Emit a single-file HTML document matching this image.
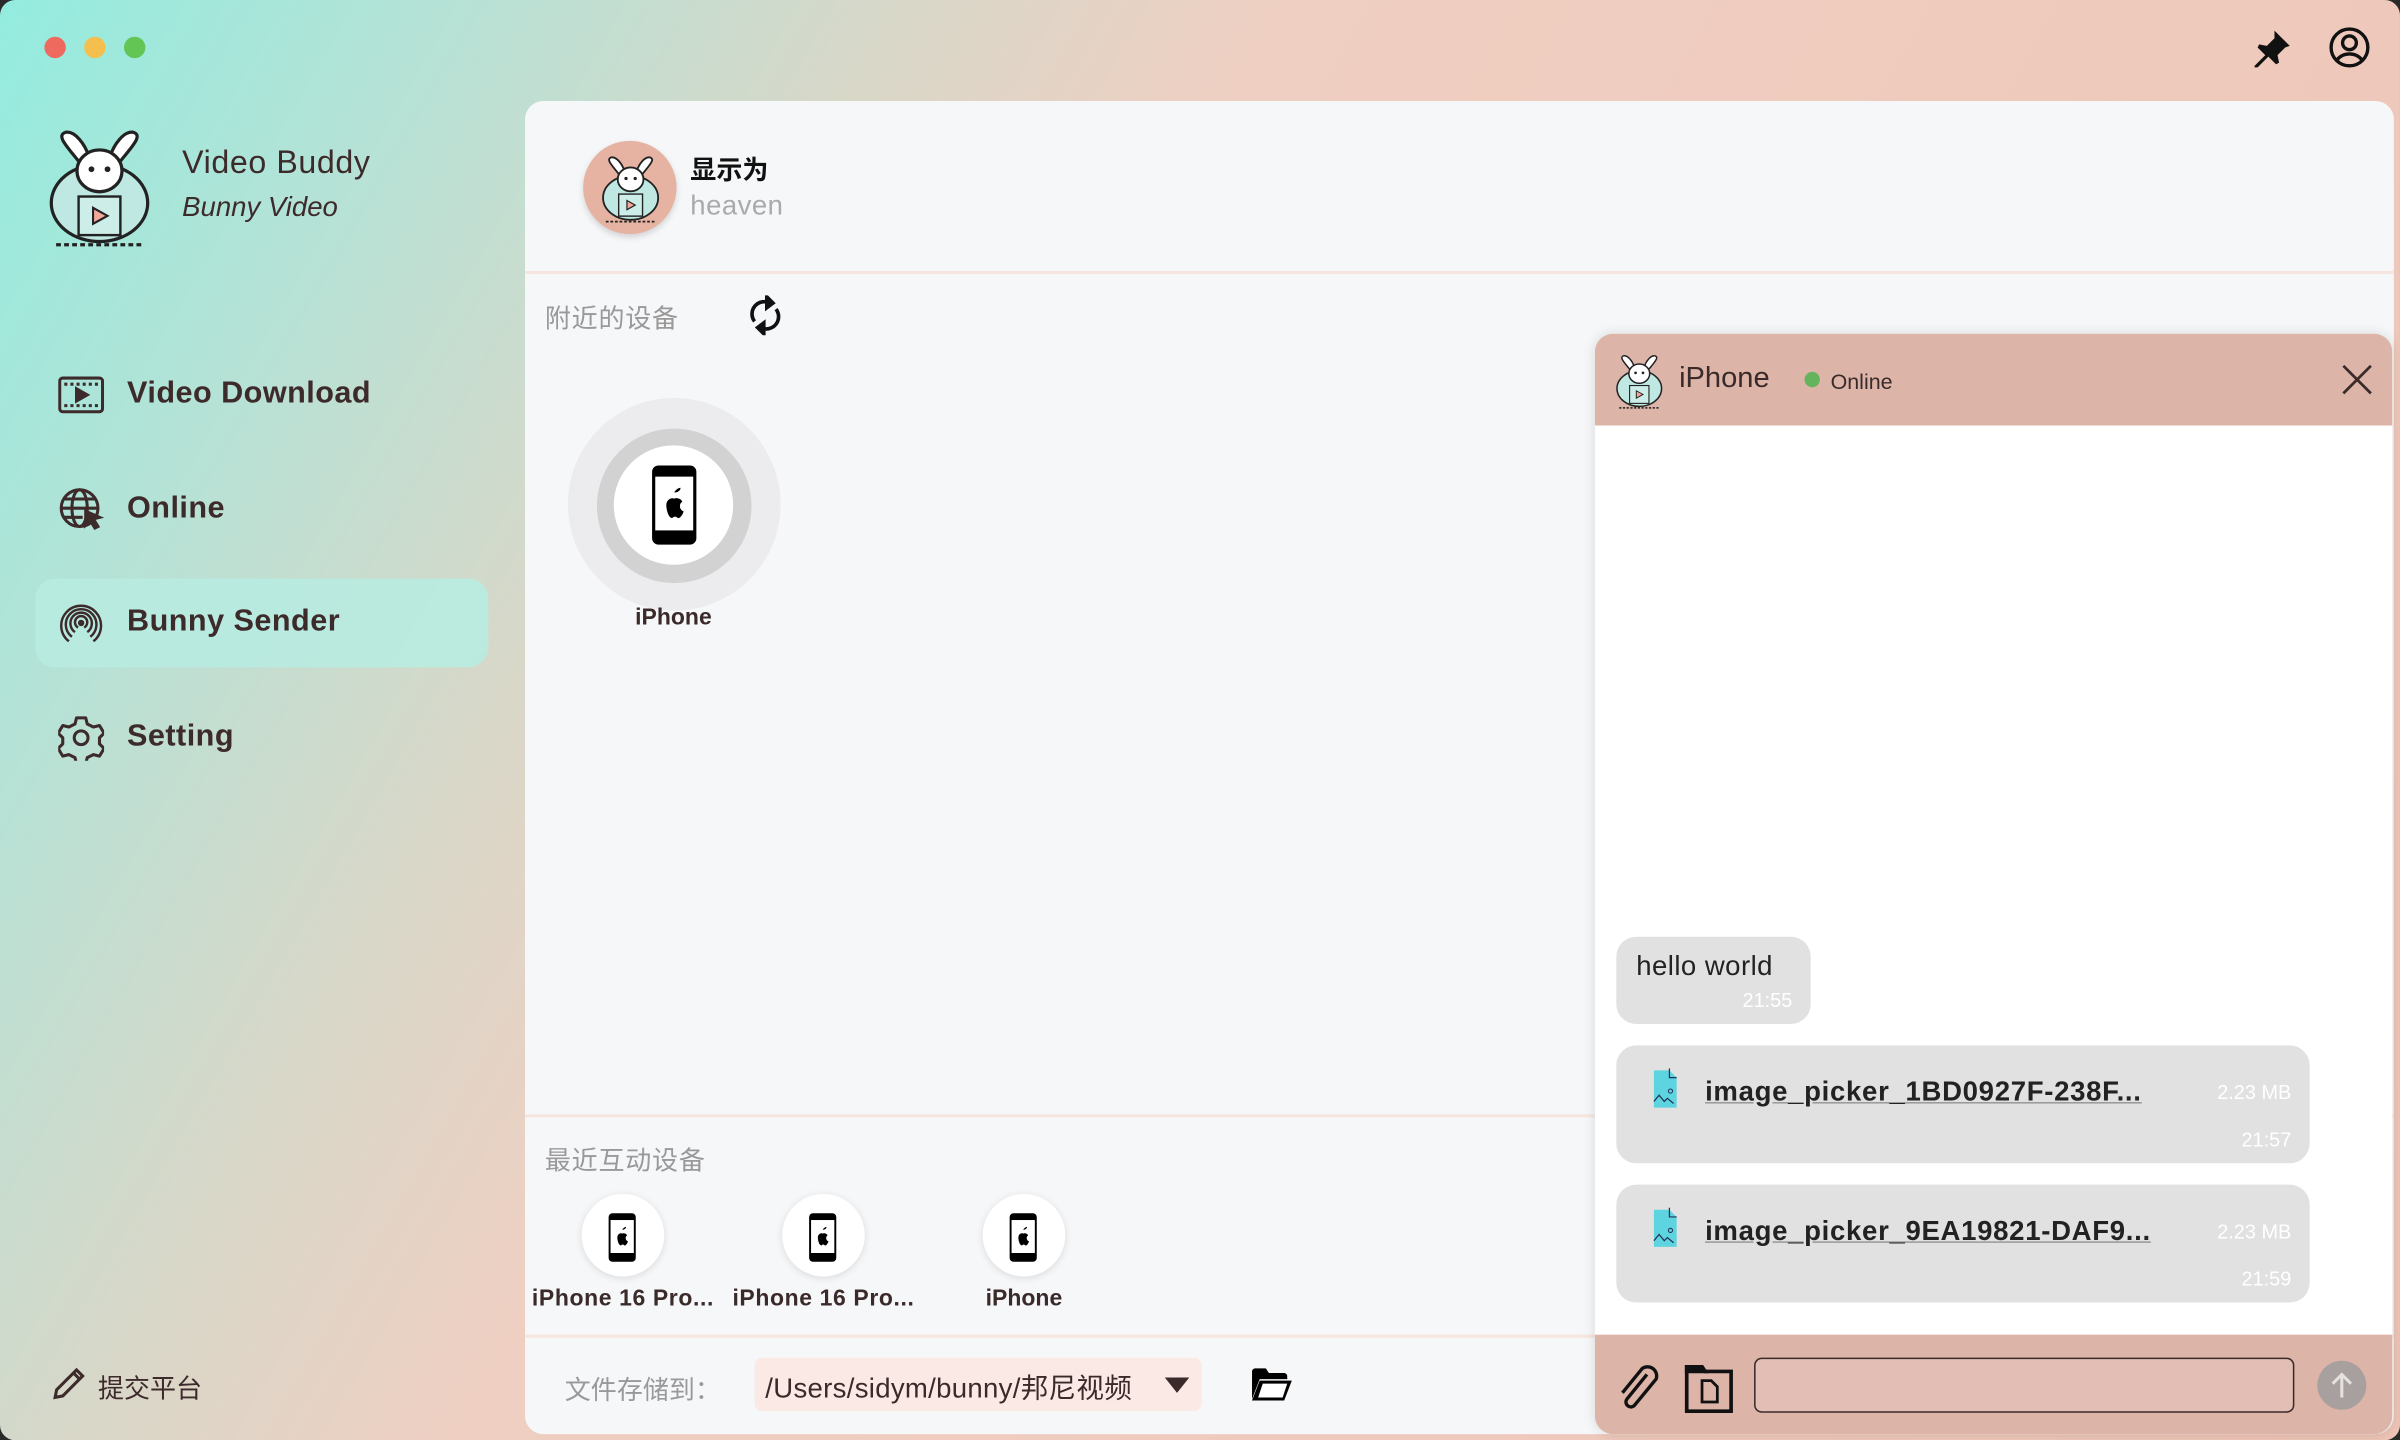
<!DOCTYPE html>
<html><head><meta charset="utf-8">
<style>
*{margin:0;padding:0;box-sizing:border-box}
html,body{width:2400px;height:1440px;overflow:hidden;background:#2a2a2a}
#s{position:absolute;left:0;top:0;width:1568px;height:941px;transform:scale(1.5306);transform-origin:0 0;
background:linear-gradient(120deg,#93ecdf 0%,#b6e2d6 14%,#d6d8c9 27%,#efcfc2 40%,#eec4b6 100%);
font-family:"Liberation Sans","Noto Sans CJK SC",sans-serif;color:#3a2a2a;overflow:hidden;border-radius:10px}
.a{position:absolute}
.dot{position:absolute;top:24px;width:14px;height:14px;border-radius:50%}
.nav{position:absolute;left:83px;font-size:20px;font-weight:bold;color:#3d2a2b;letter-spacing:.3px}
.main{position:absolute;left:343px;top:66px;width:1221px;height:871px;background:#f6f7f9;border-radius:12px;overflow:hidden}
.hr{position:absolute;left:0;right:0;height:2px;background:#f7e6df}
.grey{color:#999;font-size:17px}
.sc{position:absolute;width:54px;height:54px;border-radius:50%;background:#fff;box-shadow:0 1px 5px rgba(0,0,0,.12)}
.lb{position:absolute;font-size:15px;font-weight:bold;color:#3a2a2a;width:140px;text-align:center}
.chat{position:absolute;left:1042px;top:218px;width:521px;height:719px;background:#fff;border-radius:12px;overflow:hidden;box-shadow:0 0 8px rgba(0,0,0,.12)}
.bub{position:absolute;background:#e1e1e1;border-radius:13px}
.fn{position:absolute;left:58px;top:20px;font-size:18px;font-weight:bold;color:#222;letter-spacing:.45px;text-decoration:underline;text-decoration-color:#999}
.sz{position:absolute;right:12px;top:23px;font-size:13px;color:#fff}
.tm{position:absolute;right:12px;bottom:8px;font-size:13px;color:#fff}
</style></head><body>
<svg width="0" height="0" style="position:absolute">
<defs>
<symbol id="ph" viewBox="0 0 30 52">
<rect x="1" y="1" width="28" height="50" rx="4" fill="#000"/>
<rect x="3" y="8" width="24" height="34" fill="#fff"/>
<path d="M15 18c1-2 3-3 4-3 0 2-2 3-4 3z M10 26c0-4 4-5 5-4 1-1 5 0 5 2-2 1-2 5 1 6-1 3-3 5-4 4-1-1-2-1-3 0-2 1-4-4-4-8z" fill="#000"/>
</symbol>
<symbol id="bun" viewBox="0 0 70 80">
<ellipse cx="35" cy="52" rx="30" ry="24" fill="#bfe8e2" stroke="#222" stroke-width="2"/>
<path d="M22 26c-8-10-14-16-8-18 6-1 12 8 14 14M48 26c8-10 14-16 8-18-6-1-12 8-14 14" fill="#fff" stroke="#222" stroke-width="2"/>
<ellipse cx="35" cy="32" rx="14" ry="13" fill="#fff" stroke="#222" stroke-width="2"/>
<circle cx="30" cy="31" r="1.8" fill="#222"/><circle cx="40" cy="31" r="1.8" fill="#222"/>
<rect x="22" y="48" width="26" height="24" fill="#cdeee8" stroke="#222" stroke-width="1.5"/>
<path d="M31 55l9 5-9 5z" fill="#f4a89a" stroke="#222" stroke-width="1.3"/>
<path d="M8 78h54" stroke="#222" stroke-width="2" stroke-dasharray="3 2"/>
</symbol>
</defs></svg>
<div id="s">
<div class="dot" style="left:29px;background:#ee6a5e"></div>
<div class="dot" style="left:55px;background:#f5bf4f"></div>
<div class="dot" style="left:81px;background:#62c554"></div>

<svg class="a" style="left:28px;top:78px" width="74" height="84"><use href="#bun"/></svg>
<div class="a" style="left:119px;top:95px;font-size:21px;color:#3d2a2b;letter-spacing:.4px">Video Buddy</div>
<div class="a" style="left:119px;top:125px;font-size:18px;font-style:italic;color:#3d2a2b">Bunny Video</div>

<svg class="a" style="left:38px;top:245px" width="30" height="26" viewBox="0 0 30 26" fill="none" stroke="#3d2a2b" stroke-width="2"><rect x="1" y="2" width="28" height="22" rx="2"/><path d="M4 6h22M4 20h22" stroke-dasharray="2 2"/><path d="M12 9l7 4-7 4z" fill="#3d2a2b"/></svg>
<div class="nav" style="top:246px">Video Download</div>
<svg class="a" style="left:38px;top:318px" width="32" height="32" viewBox="0 0 32 32" fill="none" stroke="#3d2a2b" stroke-width="2"><circle cx="14" cy="14" r="12"/><ellipse cx="14" cy="14" rx="5" ry="12"/><path d="M2 14h24M4 8h20M4 20h12"/><path d="M18 16l9 4-4 1 3 5-2 1-3-5-3 3z" fill="#3d2a2b"/></svg>
<div class="nav" style="top:321px">Online</div>
<div class="a" style="left:23px;top:378px;width:296px;height:58px;background:#b8ebe0;border-radius:13px;opacity:.9"></div>
<svg class="a" style="left:38px;top:392px" width="30" height="30" viewBox="0 0 30 30" fill="none" stroke="#3d2a2b" stroke-width="1.6"><path d="M7 27A13 13 0 1 1 23 27M9 24a10 10 0 1 1 12 0M11 21a7 7 0 1 1 8 0M13 18a4 4 0 1 1 4 0"/><circle cx="15" cy="15" r="1.3" fill="#3d2a2b"/></svg>
<div class="nav" style="top:395px">Bunny Sender</div>
<svg class="a" style="left:38px;top:467px" width="30" height="30" viewBox="0 0 30 30" fill="none" stroke="#3d2a2b" stroke-width="2"><path d="M12 2h6l1 4 4 2 4-1 3 5-3 3v4l3 3-3 5-4-1-4 2-1 4h-6l-1-4-4-2-4 1-3-5 3-3v-4l-3-3 3-5 4 1 4-2z" stroke-linejoin="round"/><circle cx="15" cy="15" r="4.5"/></svg>
<div class="nav" style="top:470px">Setting</div>

<svg class="a" style="left:33px;top:892px" width="24" height="24" viewBox="0 0 24 24" fill="none" stroke="#3d2a2b" stroke-width="2"><path d="M3 21l1-5L17 3l4 4L8 20z M15 5l4 4"/></svg>
<div class="a" style="left:64px;top:893px;font-size:17px;color:#3d2a2b">提交平台</div>

<svg class="a" style="left:1470px;top:18px" width="28" height="28" viewBox="0 0 28 28"><path d="M16 2l10 10-3 1-5 5 1 5-2 1-5-5-7 7-2 0 0-1 7-7-5-5 1-2 5 1 5-5z" fill="#111"/></svg>
<svg class="a" style="left:1521px;top:17px" width="28" height="28" viewBox="0 0 28 28" fill="none" stroke="#111" stroke-width="2.2"><circle cx="14" cy="14" r="12"/><circle cx="14" cy="11" r="4.5"/><path d="M6 22c4-5 12-5 16 0"/></svg>

<div class="main">
 <div class="a" style="left:38px;top:26px;width:61px;height:61px;border-radius:50%;background:#e6b3a3;box-shadow:0 2px 4px rgba(0,0,0,.15)"></div>
 <svg class="a" style="left:48px;top:28px" width="42" height="56"><use href="#bun"/></svg>
 <div class="a" style="left:108px;top:31px;font-size:17px;font-weight:bold;color:#111">显示为</div>
 <div class="a" style="left:108px;top:58px;font-size:18px;color:#aaa;letter-spacing:.3px">heaven</div>
 <div class="hr" style="top:111px"></div>
 <div class="a grey" style="left:13px;top:128px;letter-spacing:.5px">附近的设备</div>
 <svg class="a" style="left:145px;top:127px" width="24" height="26" viewBox="0 0 24 26" fill="none" stroke="#111" stroke-width="2.4"><path d="M5 17A8 8 0 0 1 15 5M19 9A8 8 0 0 1 9 21"/><path d="M13 1l4 4-4 3z M11 25l-4-4 4-3z" fill="#111"/></svg>
 <div class="a" style="left:28px;top:194px;width:139px;height:139px;border-radius:50%;background:#ececee"></div>
 <div class="a" style="left:47px;top:214px;width:101px;height:101px;border-radius:50%;background:#d2d2d3"></div>
 <div class="a" style="left:58px;top:225px;width:78px;height:78px;border-radius:50%;background:#fff"></div>
 <svg class="a" style="left:82px;top:237px" width="31" height="54"><use href="#ph"/></svg>
 <div class="lb" style="left:27px;top:329px">iPhone</div>
 <div class="hr" style="top:662px"></div>
 <div class="a grey" style="left:13px;top:678px;letter-spacing:.5px">最近互动设备</div>
 <div class="sc" style="left:37px;top:714px"></div><svg class="a" style="left:54px;top:726px" width="19" height="33"><use href="#ph"/></svg>
 <div class="sc" style="left:168px;top:714px"></div><svg class="a" style="left:185px;top:726px" width="19" height="33"><use href="#ph"/></svg>
 <div class="sc" style="left:299px;top:714px"></div><svg class="a" style="left:316px;top:726px" width="19" height="33"><use href="#ph"/></svg>
 <div class="lb" style="left:-6px;top:774px;letter-spacing:.4px">iPhone 16 Pro...</div>
 <div class="lb" style="left:125px;top:774px;letter-spacing:.4px">iPhone 16 Pro...</div>
 <div class="lb" style="left:256px;top:774px">iPhone</div>
 <div class="hr" style="top:806px"></div>
 <div class="a grey" style="left:26px;top:828px">文件存储到：</div>
 <div class="a" style="left:150px;top:821px;width:292px;height:35px;background:#fbe9e6;border-radius:5px"></div>
 <div class="a" style="left:157px;top:827px;font-size:18px;color:#3a2a2a;letter-spacing:.2px">/Users/sidym/bunny/邦尼视频</div>
 <svg class="a" style="left:418px;top:834px" width="16" height="11"><path d="M0 0h16L8 10z" fill="#3a2a2a"/></svg>
 <svg class="a" style="left:474px;top:827px" width="28" height="24" viewBox="0 0 28 24"><path d="M1 3c0-1 1-2 2-2h7l2 3h10c1 0 2 1 2 2v2H6L1 21z M1 22L6 9h21l-5 13z" fill="#000"/><path d="M5 20l3-9h16l-3 9z" fill="#fff"/></svg>
</div>

<div class="chat">
 <div class="a" style="left:0;top:0;width:521px;height:60px;background:#dcb4a8"></div>
 <svg class="a" style="left:12px;top:10px" width="34" height="40"><use href="#bun"/></svg>
 <div class="a" style="left:55px;top:19px;font-size:19px;color:#3a2a2a">iPhone</div>
 <div class="a" style="left:137px;top:25px;width:10px;height:10px;border-radius:50%;background:#65b35c"></div>
 <div class="a" style="left:154px;top:23px;font-size:14px;color:#3a2a2a">Online</div>
 <svg class="a" style="left:488px;top:20px" width="20" height="20"><path d="M1 1l18 18M19 1L1 19" stroke="#3a2a2a" stroke-width="1.8"/></svg>
 <div class="bub" style="left:14px;top:394px;width:127px;height:57px"><div class="a" style="left:13px;top:9px;font-size:18px;color:#222;letter-spacing:.3px">hello world</div><div class="tm" style="font-size:13px">21:55</div></div>
 <div class="bub" style="left:14px;top:465px;width:453px;height:77px">
  <svg class="a" style="left:20px;top:15px" width="24" height="27" viewBox="0 0 22 40"><path d="M0 2h15l7 7v29H0z" fill="#5ed4e0"/><path d="M15 0v9h7" fill="none" stroke="#235" stroke-width="1.2"/><circle cx="16" cy="22" r="2" fill="none" stroke="#235"/><path d="M0 32l5-6 5 6 3-3 6 5" fill="none" stroke="#235" stroke-width="1.2"/></svg>
  <div class="fn">image_picker_1BD0927F-238F...</div><div class="sz">2.23 MB</div><div class="tm">21:57</div></div>
 <div class="bub" style="left:14px;top:556px;width:453px;height:77px">
  <svg class="a" style="left:20px;top:15px" width="24" height="27" viewBox="0 0 22 40"><path d="M0 2h15l7 7v29H0z" fill="#5ed4e0"/><path d="M15 0v9h7" fill="none" stroke="#235" stroke-width="1.2"/><circle cx="16" cy="22" r="2" fill="none" stroke="#235"/><path d="M0 32l5-6 5 6 3-3 6 5" fill="none" stroke="#235" stroke-width="1.2"/></svg>
  <div class="fn">image_picker_9EA19821-DAF9...</div><div class="sz">2.23 MB</div><div class="tm">21:59</div></div>
 <div class="a" style="left:0;top:654px;width:521px;height:65px;background:#dcb4a8"></div>
 <svg class="a" style="left:14px;top:672px" width="30" height="34" viewBox="0 0 30 34" fill="none" stroke="#111" stroke-width="2.2"><path d="M20 8L7 24a3 3 0 0 0 5 4L26 11a6 6 0 0 0-9-7L4 20"/></svg>
 <svg class="a" style="left:58px;top:672px" width="34" height="34" viewBox="0 0 34 34" fill="none" stroke="#111" stroke-width="2.4"><path d="M2 6V3h10l2 3h17v26H2z" fill="none"/><path d="M2 3h10l2 3H2z" fill="#111"/><path d="M12 12h6l4 4v10H12z" stroke-width="1.8"/></svg>
 <div class="a" style="left:104px;top:669px;width:353px;height:36px;background:#e2beb4;border:1.5px solid #3a2a2a;border-radius:5px"></div>
 <div class="a" style="left:472px;top:671px;width:32px;height:32px;border-radius:50%;background:#a7a09f"></div>
 <svg class="a" style="left:479px;top:678px" width="18" height="18"><path d="M9 17V2M3 8l6-6 6 6" stroke="#e6e0de" stroke-width="2" fill="none"/></svg>
</div>
</div>
</body></html>
